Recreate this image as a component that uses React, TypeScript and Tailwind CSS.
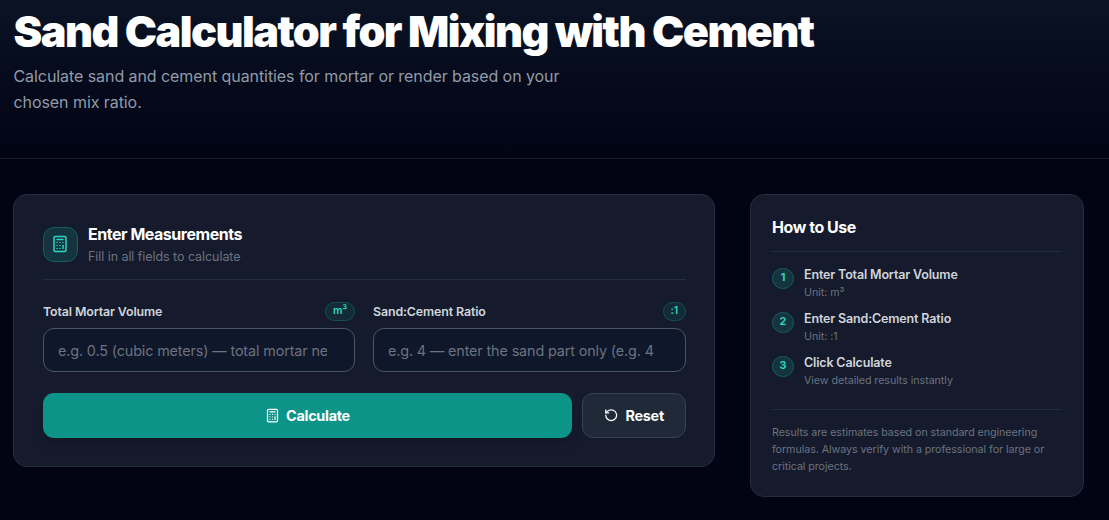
import { Calculator, RotateCcw } from "lucide-react";

const fields = [
  {
    label: "Total Mortar Volume",
    unit: "m³",
    placeholder: "e.g. 0.5 (cubic meters) — total mortar needed",
  },
  {
    label: "Sand:Cement Ratio",
    unit: ":1",
    placeholder: "e.g. 4 — enter the sand part only (e.g. 4 for 4:1)",
  },
];

const steps = [
  { title: "Enter Total Mortar Volume", detail: "Unit: m³" },
  { title: "Enter Sand:Cement Ratio", detail: "Unit: :1" },
  { title: "Click Calculate", detail: "View detailed results instantly" },
];

const Header = () => (
  <header className="border-b border-[#1a1f2d] bg-linear-to-b from-[#0b1324] to-[#020414] pt-2.5 pb-[43px] pl-[13.5px]">
    <h1 className="text-[43.2px] leading-[43px] font-black tracking-[-1.55px] text-white">
      Sand Calculator for Mixing with Cement
    </h1>
    <p className="mt-2.5 max-w-[600px] text-[16px] leading-[26px] tracking-[-0.07px] text-[#929ba8]">
      Calculate sand and cement quantities for mortar or render based on your chosen mix ratio.
    </p>
  </header>
);

const CalculatorForm = () => (
  <section className="w-[702px] rounded-[14px] border border-[#252e3d] bg-[#151b2c] pt-[27px] pr-7 pb-7 pl-[29px]">
    <div className="flex items-start gap-2.5 border-b border-[#252e3d] pb-[13px]">
      <div className="mt-[5px] flex size-[35px] items-center justify-center rounded-[11px] border border-[#155e5f] bg-[#14343f] pr-px pb-px">
        <Calculator className="size-[18px] text-[#2dd4bf]" />
      </div>
      <div>
        <h2 className="text-[16px] leading-[25px] font-bold tracking-[-0.47px] text-white">Enter Measurements</h2>
        <p className="mt-px text-[12.5px] leading-[18px] tracking-[-0.06px] text-[#6b7280]">
          Fill in all fields to calculate
        </p>
      </div>
    </div>
    <div className="mt-[22px] grid grid-cols-[312px_313px] gap-[18px]">
      {fields.map((field) => (
        <div key={field.label}>
          <div className="mb-[7px] flex h-[19px] items-center justify-between">
            <label className="pt-0.5 text-[12.4px] font-semibold tracking-[-0.12px] text-[#d1d5db]">{field.label}</label>
            <span className="h-[19px] rounded-full border border-[#15504f] bg-[#132a38] px-[7px] text-[10.6px] leading-4 font-semibold tracking-[-0.2px] text-[#2dd4bf]">
              {field.unit}
            </span>
          </div>
          <input
            className="h-11 w-full rounded-[11px] border border-[#4b5563] bg-[#0f172a] pr-[27px] pl-3.5 text-[14.4px] tracking-[-0.14px] text-white placeholder:text-[#6b7280]"
            placeholder={field.placeholder}
          />
        </div>
      ))}
    </div>
    <div className="mt-[21px] flex gap-2.5">
      <button className="flex h-[45px] flex-1 items-center justify-center gap-1.5 rounded-[11px] bg-[#0d9488] text-[14.4px] font-bold tracking-[-0.27px] text-white shadow-lg shadow-black/10">
        <Calculator className="size-[15px]" />
        Calculate
      </button>
      <button className="flex h-[45px] w-[104px] items-center justify-center gap-[7px] rounded-[11px] border border-[#374151] bg-[#1f2937] text-[14.4px] font-bold tracking-[-0.27px] text-white">
        <RotateCcw className="size-[14.4px]" />
        Reset
      </button>
    </div>
  </section>
);

const HowToUse = () => (
  <aside className="w-[334px] rounded-[14px] border border-[#252e3d] bg-[#151b2c] pt-[21px] pr-[22px] pb-[21px] pl-[21px]">
    <h2 className="border-b border-[#252e3d] pb-[13px] text-[16px] leading-[22px] font-bold tracking-[-0.45px] text-white">
      How to Use
    </h2>
    <ol className="mt-3.5 flex flex-col gap-[9px]">
      {steps.map((step, stepIndex) => (
        <li key={step.title} className="flex gap-2.5">
          <span className="mt-0.5 flex h-[21px] w-[22px] items-center justify-center rounded-full border border-[#155e5f] bg-[#14343f] text-[10.8px] font-bold text-[#2dd4bf]">
            {stepIndex + 1}
          </span>
          <div>
            <p className="text-[12.5px] leading-[18px] font-semibold tracking-[-0.16px] text-[#d1d5db]">{step.title}</p>
            <p className="text-[10.7px] leading-[17px] tracking-[-0.05px] text-[#6b7280]">{step.detail}</p>
          </div>
        </li>
      ))}
    </ol>
    <p className="mt-5 border-t border-[#252e3d] pt-3.5 text-[10.7px] leading-[17px] tracking-[-0.05px] text-[#6b7280]">
      Results are estimates based on standard engineering formulas. Always verify with a professional for large or
      critical projects.
    </p>
  </aside>
);

export default function App() {
  return (
    <div className="min-h-screen bg-[#020414] font-['Inter',sans-serif]">
      <Header />
      <main className="flex items-start gap-[35px] pt-[35px] pl-[13px]">
        <CalculatorForm />
        <HowToUse />
      </main>
    </div>
  );
}
